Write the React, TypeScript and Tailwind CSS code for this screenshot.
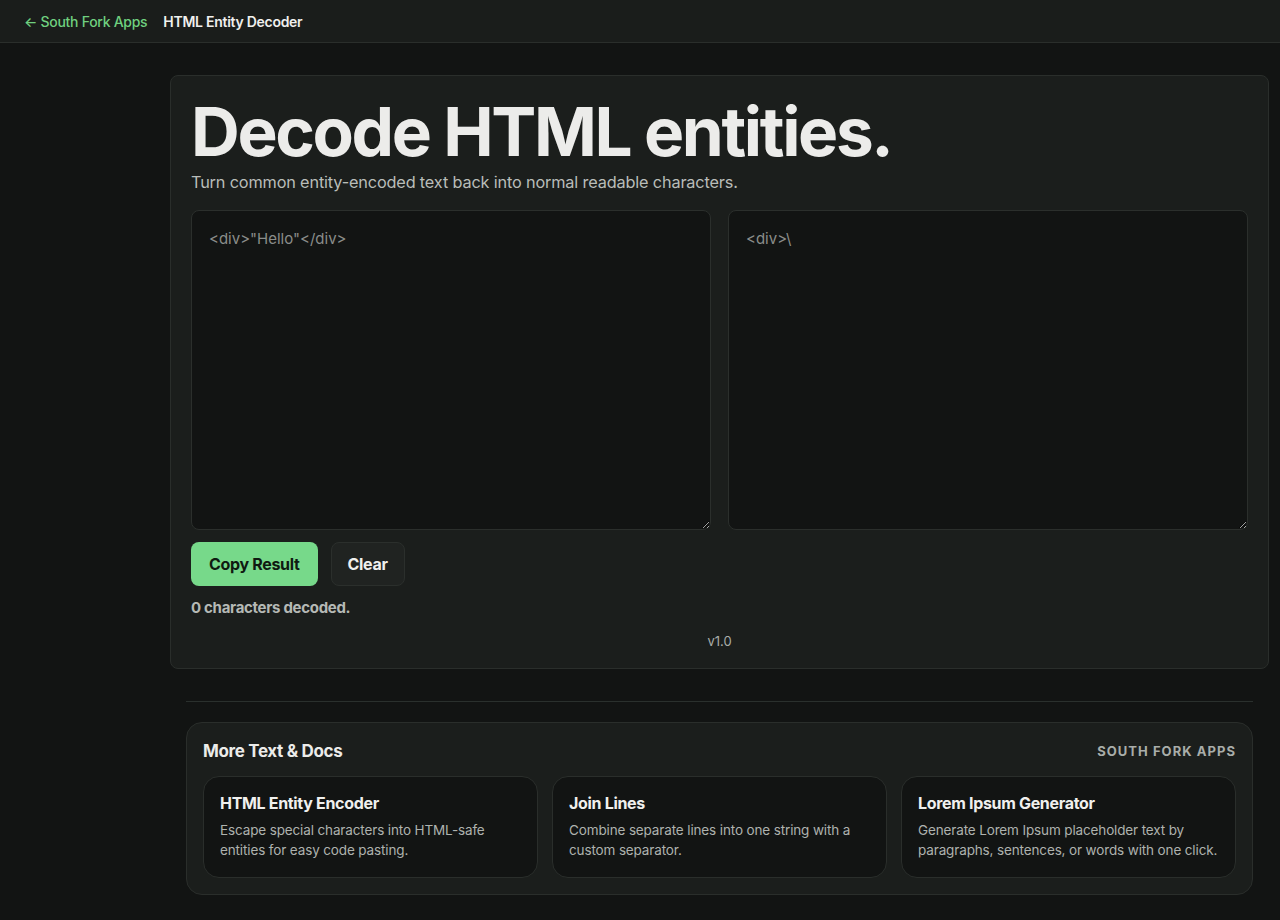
import React, { useState } from 'react';

const related = [
  { title: 'HTML Entity Encoder', desc: 'Escape special characters into HTML-safe entities for easy code pasting.' },
  { title: 'Join Lines', desc: 'Combine separate lines into one string with a custom separator.' },
  { title: 'Lorem Ipsum Generator', desc: 'Generate Lorem Ipsum placeholder text by paragraphs, sentences, or words with one click.' },
];

const App: React.FC = () => {
  const [input, setInput] = useState('');

  return (
    <div className="min-h-[920px] bg-[#121413] text-[#e8e8e6] font-['Inter','Liberation_Sans',sans-serif]">
      <header className="h-[43px] bg-[#1a1d1b] border-b border-[#2a2e2b] flex items-center px-6 gap-4 text-[14px]">
        <a className="text-[#6fd07f] font-medium tracking-[-0.02em]">← South Fork Apps</a>
        <span className="font-semibold text-[#f0f0ee] tracking-[-0.02em]">HTML Entity Decoder</span>
      </header>

      <main className="pl-[170px] pr-[11px] pt-[32px] pb-6">
        <section className="bg-[#1b1e1c] border border-[#2a2e2b] rounded-lg px-5 pt-[18px] pb-[17px]">
          <h1 className="text-[67.5px] leading-[76px] font-bold tracking-[-0.035em] text-[#ececea]">Decode HTML entities.</h1>
          <p className="text-[16.3px] text-[#b9bdb9] tracking-[-0.01em] mt-0">Turn common entity-encoded text back into normal readable characters.</p>

          <div className="grid grid-cols-2 gap-[17px] mt-4">
            <textarea
              value={input}
              onChange={e => setInput(e.target.value)}
              placeholder={'<div>"Hello"</div>'}
              className="h-[320px] bg-[#121413] border border-[#2b2f2c] rounded-lg px-[17px] py-[17px] text-[15px] text-[#e8e8e6] placeholder:text-[#8a8d8a] outline-none"
            />
            <textarea
              readOnly
              placeholder={'<div>\\'}
              className="h-[320px] bg-[#121413] border border-[#2b2f2c] rounded-lg px-[17px] py-[17px] text-[15px] text-[#e8e8e6] placeholder:text-[#8a8d8a] outline-none"
            />
          </div>

          <div className="flex gap-[13px] mt-3">
            <button className="h-[44px] px-[18px] rounded-lg bg-[#77d98a] text-[#0f1a11] text-[16px] font-bold tracking-[-0.02em]">Copy Result</button>
            <button className="h-[44px] px-4 rounded-lg bg-[#202321] border border-[#2b2f2c] text-[#f0f0ee] text-[16px] font-bold tracking-[-0.02em]">Clear</button>
          </div>

          <p className="mt-[11px] text-[15px] font-bold text-[#b5b9b5] tracking-[-0.02em]">0 characters decoded.</p>
          <p className="mt-[12px] text-center text-[13px] text-[#a9ada9]">v1.0</p>
        </section>

        <div className="mx-4 mt-8 border-t border-[#2a302d]" />

        <section className="mx-4 mt-5 bg-[#1b1e1c] border border-[#2a2e2b] rounded-2xl px-4 pt-4 pb-4">
          <div className="flex items-center justify-between">
            <h2 className="text-[17px] font-bold text-[#ececea] tracking-[-0.02em]">More Text &amp; Docs</h2>
            <span className="text-[13px] font-bold tracking-[0.08em] text-[#a9ada9]">SOUTH FORK APPS</span>
          </div>
          <div className="grid grid-cols-3 gap-[14px] mt-[11px]">
            {related.map(item => (
              <a key={item.title} className="bg-[#121413] border border-[#2a2e2b] rounded-2xl px-4 pt-[14px] pb-[17px] h-[102px]">
                <h3 className="text-[16px] font-bold text-[#f0f0ee] tracking-[-0.02em]">{item.title}</h3>
                <p className="mt-[5px] text-[13.5px] leading-[20px] text-[#aeb2ae] tracking-[-0.01em]">{item.desc}</p>
              </a>
            ))}
          </div>
        </section>
      </main>
    </div>
  );
};

export default App;
